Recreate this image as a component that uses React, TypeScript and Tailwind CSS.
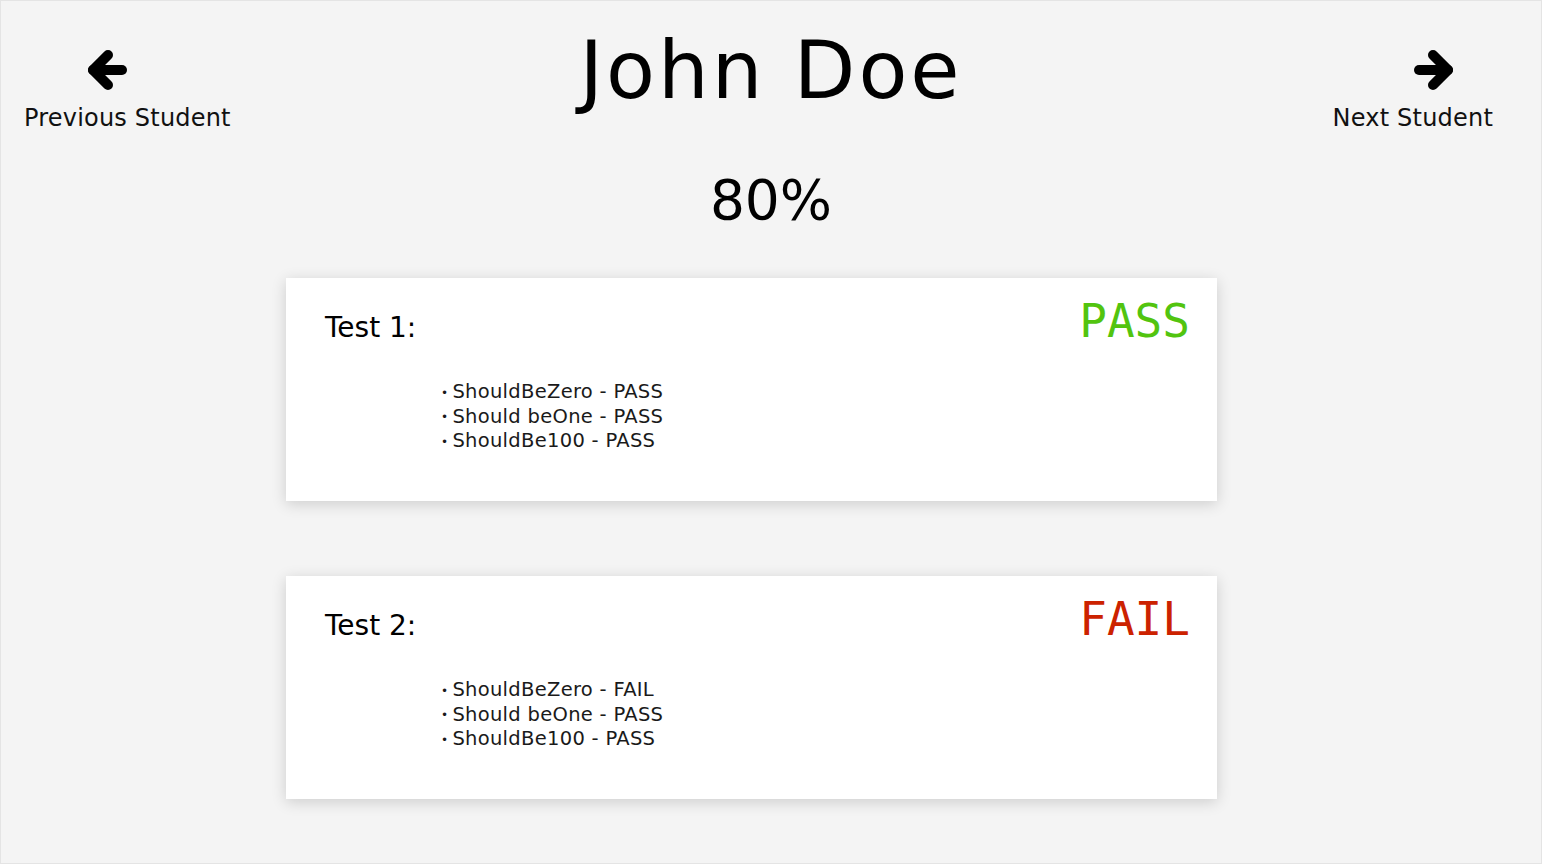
type Test = {
  name: string;
  passed: boolean;
  cases: { label: string; result: string }[];
};

const tests: Test[] = [
  {
    name: 'Test 1:',
    passed: true,
    cases: [
      { label: 'ShouldBeZero', result: 'PASS' },
      { label: 'Should beOne', result: 'PASS' },
      { label: 'ShouldBe100', result: 'PASS' },
    ],
  },
  {
    name: 'Test 2:',
    passed: false,
    cases: [
      { label: 'ShouldBeZero', result: 'FAIL' },
      { label: 'Should beOne', result: 'PASS' },
      { label: 'ShouldBe100', result: 'PASS' },
    ],
  },
];

function Arrow({ dir, className }: { dir: 'left' | 'right'; className?: string }) {
  return (
    <svg
      width="42"
      height="42"
      viewBox="0 0 42 42"
      className={className}
      style={dir === 'right' ? { transform: 'scaleX(-1)' } : undefined}
    >
      <g fill="none" stroke="#000" strokeWidth="10" strokeLinecap="round" strokeLinejoin="round">
        <path d="M7 21H36" />
        <path d="M22 6L7 21L22 36" />
      </g>
    </svg>
  );
}

function TestCard({ test }: { test: Test }) {
  return (
    <div className="ml-[285px] w-[931px] h-[223px] bg-white shadow-[0_3px_14px_rgba(0,0,0,0.16)] flex justify-between pl-[39px] pr-[27px]">
      <div className="flex flex-col">
        <div className="pt-[32px] text-[28px] leading-[36px] text-black">{test.name}</div>
        <ul className="mt-[34px] ml-[116px] text-[19.5px] leading-[24.5px] tracking-[0.3px] text-[#1a1a1a]">
          {test.cases.map((c) => (
            <li key={c.label}>
              <span className="text-[12px] leading-none align-middle mr-[4px]">•</span>
              {c.label} - {c.result}
            </li>
          ))}
        </ul>
      </div>
      <div
        className={
          'pt-[16px] text-[46px] leading-[54px] font-["DejaVu_Sans_Mono",monospace] ' +
          (test.passed ? 'text-[#52c40f]' : 'text-[#cc2200]')
        }
      >
        {test.passed ? 'PASS' : 'FAIL'}
      </div>
    </div>
  );
}

export default function App() {
  return (
    <div className="h-[864px] bg-[#f4f4f4] border border-[#e4e4e4] font-['DejaVu_Sans',sans-serif] text-black overflow-hidden">
      <div className="grid grid-cols-[1fr_auto_1fr] px-[23px] pt-[24px]">
        <button className="justify-self-start flex flex-col items-start pt-[24px]">
          <Arrow dir="left" className="ml-[62px]" />
          <span className="mt-[13px] text-[24px] leading-[28px] tracking-[0.2px] text-[#111]">Previous Student</span>
        </button>
        <h1 className="text-[80px] leading-[92px] font-normal tracking-[3px]">John Doe</h1>
        <button className="justify-self-end flex flex-col items-end pt-[24px] pr-[25px]">
          <Arrow dir="right" className="mr-[38px]" />
          <span className="mt-[13px] text-[24px] leading-[28px] tracking-[0.2px] text-[#111]">Next Student</span>
        </button>
      </div>
      <div className="text-center text-[55px] leading-[64px] mt-[36px] font-normal">80%</div>
      <div className="mt-[46px] flex flex-col gap-[75px]">
        {tests.map((t) => (
          <TestCard key={t.name} test={t} />
        ))}
      </div>
    </div>
  );
}
